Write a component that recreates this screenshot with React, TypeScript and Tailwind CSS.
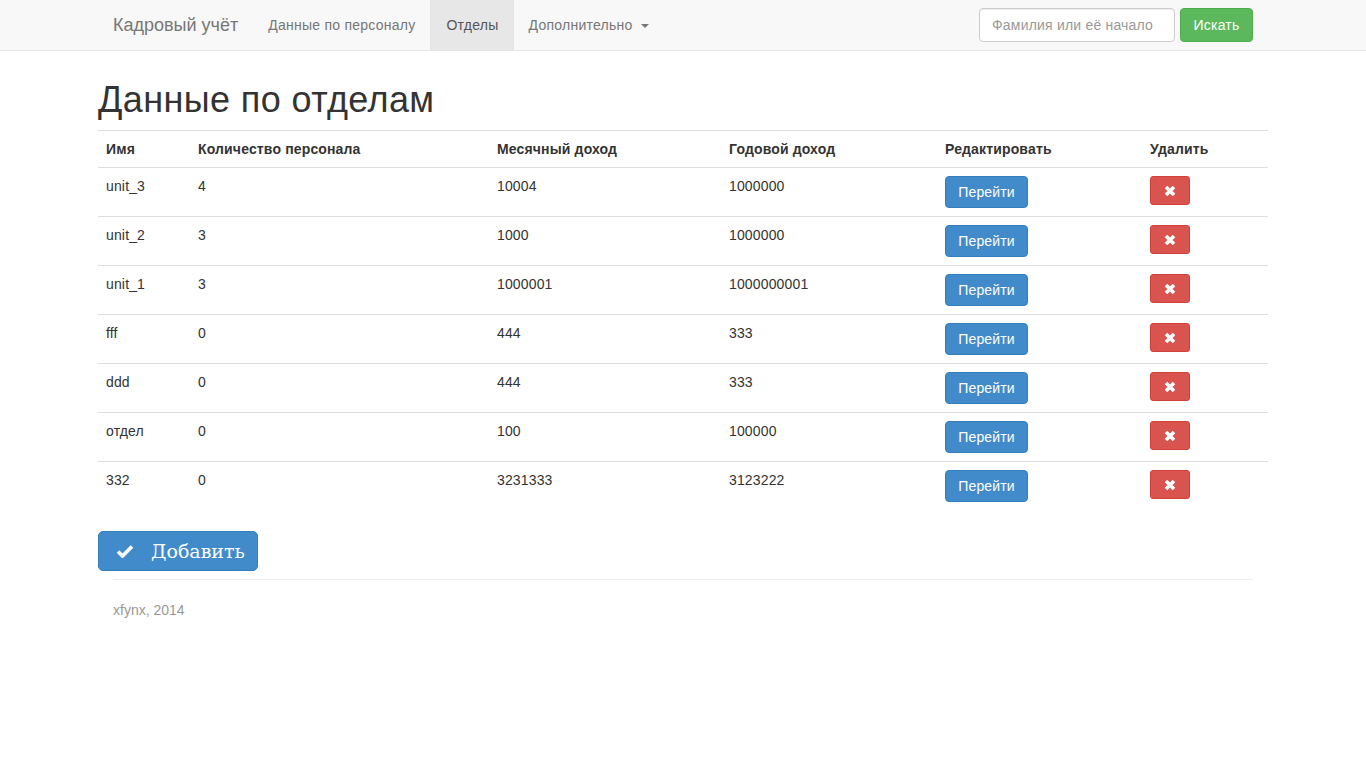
import React from 'react';

type Unit = { name: string; staff: number; monthly: string; yearly: string };

const units: Unit[] = [
  { name: 'unit_3', staff: 4, monthly: '10004', yearly: '1000000' },
  { name: 'unit_2', staff: 3, monthly: '1000', yearly: '1000000' },
  { name: 'unit_1', staff: 3, monthly: '1000001', yearly: '1000000001' },
  { name: 'fff', staff: 0, monthly: '444', yearly: '333' },
  { name: 'ddd', staff: 0, monthly: '444', yearly: '333' },
  { name: 'отдел', staff: 0, monthly: '100', yearly: '100000' },
  { name: '332', staff: 0, monthly: '3231333', yearly: '3123222' },
];

function RemoveIcon() {
  return (
    <svg width="12" height="12" viewBox="0 0 12 12">
      <path d="M2 2 L10 10 M10 2 L2 10" stroke="#fff" strokeWidth="3.6" strokeLinecap="butt" />
    </svg>
  );
}

function CheckIcon() {
  return (
    <svg width="18" height="14" viewBox="0 0 18 14">
      <polyline points="2,7.5 6.5,12 16,2.5" fill="none" stroke="#fff" strokeWidth="3.6" strokeLinejoin="miter" />
    </svg>
  );
}

function Navbar() {
  return (
    <nav className="h-[51px] bg-[#f8f8f8] border-b border-[#e7e7e7]">
      <div className="w-[1170px] mx-auto px-[15px] flex items-center h-[50px]">
        <a className="-ml-[15px] px-[15px] h-[50px] leading-[50px] text-[18px] text-[#777]">Кадровый учёт</a>
        <ul className="flex h-[50px] tracking-[0.25px]">
          <li className="px-[15px] leading-[50px] text-[#777]">Данные по персоналу</li>
          <li className="pl-[16px] pr-[15px] leading-[50px] text-[#555] bg-[#e7e7e7]">Отделы</li>
          <li className="px-[15px] leading-[50px] text-[#777] flex items-center">
            Дополнительно
            <span className="ml-[8px] mt-[2px] w-0 h-0 border-t-[4px] border-t-[#777] border-x-[4px] border-x-transparent" />
          </li>
        </ul>
        <form className="ml-auto flex gap-[5px]">
          <input
            className="w-[196px] h-[34px] px-[12px] border border-[#ccc] rounded-[4px] bg-white text-[14px] tracking-[0.2px] text-[#555] placeholder:text-[#999] outline-none shadow-[inset_0_1px_1px_rgba(0,0,0,0.075)]"
            placeholder="Фамилия или её начало"
          />
          <button type="button" className="h-[34px] w-[73px] bg-[#5cb85c] border border-[#4cae4c] rounded-[4px] text-white text-[14px] tracking-[0.2px]">
            Искать
          </button>
        </form>
      </div>
    </nav>
  );
}

export default function App() {
  return (
    <div className="min-h-[767px] bg-white text-[#333] text-[14px] leading-[20px] font-['Liberation_Sans',Arial,sans-serif]">
      <Navbar />
      <main className="w-[1170px] mx-auto">
        <h1 className="mt-[29px] mb-[10px] text-[36px] leading-[40px] font-medium tracking-[0.4px]">Данные по отделам</h1>
        <table className="w-full table-fixed border-collapse tracking-[0.15px]">
          <colgroup>
            <col className="w-[92px]" />
            <col className="w-[299px]" />
            <col className="w-[232px]" />
            <col className="w-[216px]" />
            <col className="w-[205px]" />
            <col className="w-[126px]" />
          </colgroup>
          <thead>
            <tr className="border-t border-[#ddd] border-b border-b-[#ddd]">
              {['Имя', 'Количество персонала', 'Месячный доход', 'Годовой доход', 'Редактировать', 'Удалить'].map((h) => (
                <th key={h} className="p-[8px] text-left font-bold align-bottom">{h}</th>
              ))}
            </tr>
          </thead>
          <tbody>
            {units.map((u, i) => (
              <tr key={u.name} className={i > 0 ? 'border-t border-[#ddd]' : ''}>
                <td className="p-[8px] align-top">{u.name}</td>
                <td className="p-[8px] align-top">{u.staff}</td>
                <td className="p-[8px] align-top">{u.monthly}</td>
                <td className="p-[8px] align-top">{u.yearly}</td>
                <td className="p-[8px] align-top">
                  <button type="button" className="h-[32px] w-[83px] bg-[#428bca] border border-[#357ebd] rounded-[4px] text-white text-[14px]">
                    Перейти
                  </button>
                </td>
                <td className="p-[8px] align-top">
                  <button type="button" className="w-[40px] h-[29px] flex items-center justify-center bg-[#d9534f] border border-[#d43f3a] rounded-[3px]">
                    <RemoveIcon />
                  </button>
                </td>
              </tr>
            ))}
          </tbody>
        </table>
        <button
          type="button"
          className="mt-[21px] h-[40px] w-[160px] flex items-center pl-[17px] gap-[17px] bg-[#428bca] border border-[#357ebd] rounded-[5px] text-white text-[19px] font-['DejaVu_Serif',serif]"
        >
          <CheckIcon />
          <span>Добавить</span>
        </button>
      </main>
      <footer className="w-[1170px] mx-auto px-[15px]">
        <hr className="mt-[8px] mb-[20px] border-0 border-t border-[#eee]" />
        <p className="text-[#999]">xfynx, 2014</p>
      </footer>
    </div>
  );
}
